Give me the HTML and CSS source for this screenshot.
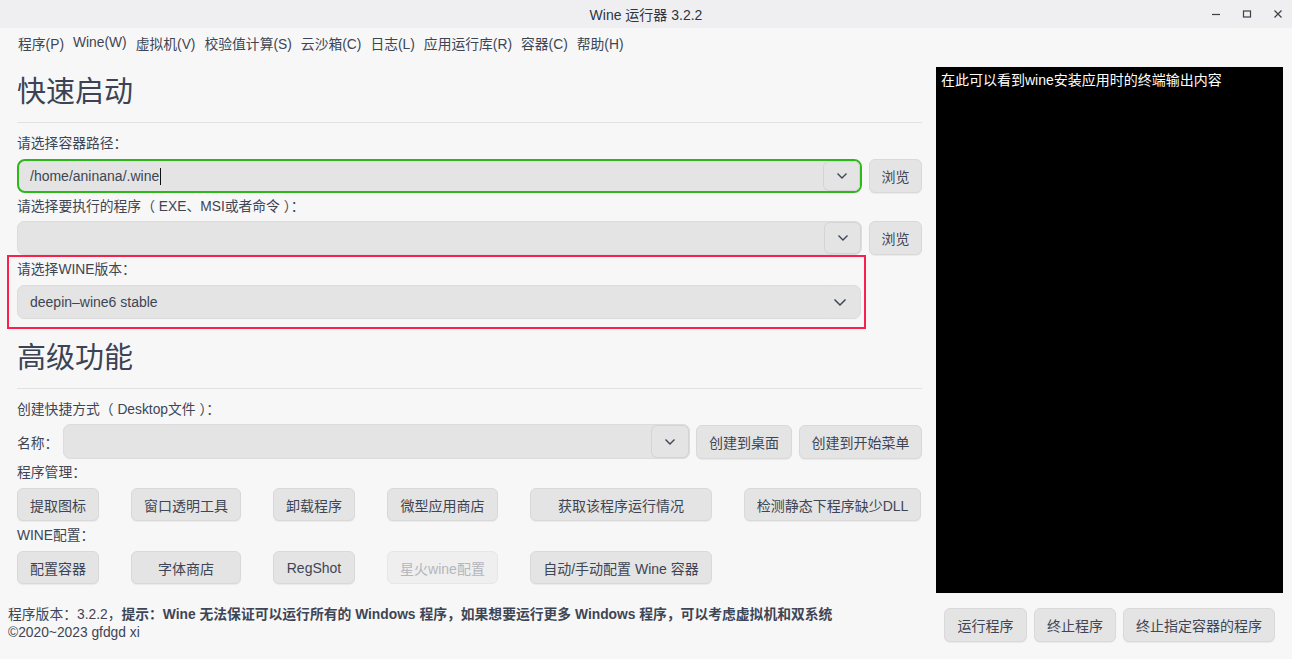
FILE: index.html
```html
<!DOCTYPE html>
<html lang="zh">
<head>
<meta charset="utf-8">
<title>Wine 运行器 3.2.2</title>
<link rel="stylesheet" href="styles.css">
</head>
<body>
<div class="window">
  <div class="titlebar">
    <span class="title">Wine 运行器 3.2.2</span>
    <div class="controls">
      <svg class="ctl" width="12" height="12" viewBox="0 0 12 12"><path d="M2 6.5h8" stroke="#3a3f4a" stroke-width="1.2"/></svg>
      <svg class="ctl" width="12" height="12" viewBox="0 0 12 12"><rect x="2.5" y="3" width="7" height="6" fill="none" stroke="#3a3f4a" stroke-width="1.2"/></svg>
      <svg class="ctl" width="12" height="12" viewBox="0 0 12 12"><path d="M2.5 2.5l7 7M9.5 2.5l-7 7" stroke="#3a3f4a" stroke-width="1.2"/></svg>
    </div>
  </div>
  <div class="menubar">
    <span>程序(P)</span><span>Wine(W)</span><span>虚拟机(V)</span><span>校验值计算(S)</span><span>云沙箱(C)</span><span>日志(L)</span><span>应用运行库(R)</span><span>容器(C)</span><span>帮助(H)</span>
  </div>
  <div class="main">
    <div class="left">
      <h1 class="heading h-first">快速启动</h1>
      <div class="sep"></div>
      <div class="label l1">请选择容器路径：</div>
      <div class="row r1">
        <div class="combo focus">
          <span class="value">/home/aninana/.wine<span class="caret"></span></span>
          <span class="drop"><svg width="12" height="8" viewBox="0 0 12 8"><path d="M1.5 1.5l4.5 4.5 4.5-4.5" fill="none" stroke="#3e4554" stroke-width="1.4"/></svg></span>
        </div>
        <button class="btn browse">浏览</button>
      </div>
      <div class="label l2">请选择要执行的程序（ EXE、MSI或者命令 ）：</div>
      <div class="row r2">
        <div class="combo">
          <span class="value"></span>
          <span class="drop"><svg width="12" height="8" viewBox="0 0 12 8"><path d="M1.5 1.5l4.5 4.5 4.5-4.5" fill="none" stroke="#3e4554" stroke-width="1.4"/></svg></span>
        </div>
        <button class="btn browse">浏览</button>
      </div>
      <div class="wine-group">
        <div class="label l3">请选择WINE版本：</div>
        <div class="combo plain">
          <span class="value">deepin–wine6 stable</span>
          <span class="drop nobox"><svg width="14" height="9" viewBox="0 0 14 9"><path d="M1.5 1.5l5.5 5.5 5.5-5.5" fill="none" stroke="#3e4554" stroke-width="1.5"/></svg></span>
        </div>
      </div>
      <h1 class="heading h-second">高级功能</h1>
      <div class="sep"></div>
      <div class="label l4">创建快捷方式（ Desktop文件 ）：</div>
      <div class="row name-row">
        <span class="name-label">名称：</span>
        <div class="combo">
          <span class="value"></span>
          <span class="drop"><svg width="12" height="8" viewBox="0 0 12 8"><path d="M1.5 1.5l4.5 4.5 4.5-4.5" fill="none" stroke="#3e4554" stroke-width="1.4"/></svg></span>
        </div>
        <button class="btn desk">创建到桌面</button>
        <button class="btn menu">创建到开始菜单</button>
      </div>
      <div class="label l5">程序管理：</div>
      <div class="grid g1">
        <button class="btn">提取图标</button>
        <button class="btn">窗口透明工具</button>
        <button class="btn">卸载程序</button>
        <button class="btn">微型应用商店</button>
        <button class="btn">获取该程序运行情况</button>
        <button class="btn">检测静态下程序缺少DLL</button>
      </div>
      <div class="label l6">WINE配置：</div>
      <div class="grid g2">
        <button class="btn">配置容器</button>
        <button class="btn">字体商店</button>
        <button class="btn">RegShot</button>
        <button class="btn disabled">星火wine配置</button>
        <button class="btn">自动/手动配置 Wine 容器</button>
      </div>
    </div>
    <div class="console">在此可以看到wine安装应用时的终端输出内容</div>
  </div>
  <div class="footer">
    <div class="info">
      <div>程序版本：3.2.2，<b>提示：Wine 无法保证可以运行所有的 Windows 程序，如果想要运行更多 Windows 程序，可以考虑虚拟机和双系统</b></div>
      <div>©2020~2023 gfdgd xi</div>
    </div>
    <div class="actions">
      <button class="btn run">运行程序</button>
      <button class="btn stop">终止程序</button>
      <button class="btn stopall">终止指定容器的程序</button>
    </div>
  </div>
</div>
</body>
</html>
```
FILE: styles.css
```css
* { box-sizing: border-box; }
html, body { margin: 0; padding: 0; }
body {
  width: 1292px;
  height: 659px;
  overflow: hidden;
  background: #f7f7f7;
  font-family: "Liberation Sans", "Noto Sans CJK SC", sans-serif;
  font-size: 13.8px;
  color: #3e4554;
}
.window { width: 1292px; height: 659px; display: flex; flex-direction: column; }

.titlebar {
  height: 28px;
  flex: none;
  background: #efeff2;
  display: flex;
  align-items: center;
  justify-content: center;
  position: relative;
}
.title { font-size: 14px; color: #2f3440; }
.controls {
  position: absolute;
  right: 8px;
  top: 8px;
  display: flex;
  gap: 19px;
}
.ctl { display: block; }

.menubar {
  height: 29px;
  flex: none;
  display: flex;
  align-items: center;
  padding-left: 18px;
  gap: 9px;
  font-size: 13.8px;
  color: #3e4554;
  margin-bottom: 1px;
}

.main {
  height: 535px;
  flex: none;
  display: flex;
  padding: 0 9px 0 17px;
  gap: 14px;
}
.left { width: 905px; display: flex; flex-direction: column; }

.heading {
  margin: 0;
  font-size: 29px;
  font-weight: normal;
  line-height: 40px;
  height: 40px;
  color: #3b4354;
}
.h-first { margin-top: 14px; }
.h-second { margin-top: 19px; }
.sep { height: 1px; background: #e2e2e2; margin-top: 10px; }

.label { height: 18px; line-height: 18px; font-size: 13.8px; }
.l1 { margin-top: 12px; }
.l2 { margin-top: 5px; }
.l3 { margin-top: 6px; }
.l4 { margin-top: 12px; }
.l5 { margin-top: 5px; }
.l6 { margin-top: 6px; }

.row { display: flex; gap: 7px; align-items: center; }
.r1 { margin-top: 6px; }
.r2 { margin-top: 5px; }

.combo {
  flex: 1;
  height: 34px;
  background: #e4e4e4;
  border: 1px solid #dcdcdc;
  border-radius: 7px;
  display: flex;
  align-items: center;
  justify-content: space-between;
  padding-left: 12px;
}
.combo.focus {
  border: 2px solid #2bb818;
  border-radius: 8px;
  padding-left: 11px;
}
.value { font-size: 14px; color: #3e4554; display: flex; align-items: center; }
.caret { display: inline-block; width: 1px; height: 17px; background: #111; margin-left: 1px; }
.drop {
  width: 37px;
  height: 100%;
  display: flex;
  align-items: center;
  justify-content: center;
  border-radius: 6px;
  box-shadow: inset 0 0 0 1px #d4d4d4;
  background: #e4e4e4;
}
.drop.nobox { box-shadow: none; width: 40px; }

.wine-group { position: relative; }
.wine-group::before {
  content: "";
  position: absolute;
  left: -10px;
  right: 56px;
  top: 0;
  bottom: -10px;
  border: 2px solid #f7214c;
  pointer-events: none;
}
.wine-group .combo { margin-top: 6px; width: 844px; flex: none; }

.btn {
  font-family: "Liberation Sans", "Noto Sans CJK SC", sans-serif;
  font-size: 14px;
  color: #3e4554;
  background: #e4e4e4;
  border: 1px solid #d9d9d9;
  border-radius: 6px;
  box-shadow: 0 1px 1px rgba(0,0,0,0.06);
  height: 33px;
  padding: 0;
  cursor: default;
}
.btn.disabled { background: #efefef; color: #b4b6bb; border-color: #e6e6e6; box-shadow: none; }
.browse { width: 53px; height: 34px; flex: none; }

.name-row { margin-top: 5px; gap: 0; }
.name-label { width: 46px; font-size: 13.8px; }
.name-row .combo { height: 35px; padding-left: 0; }
.name-row .combo .drop { width: 38px; }
.desk { width: 96px; margin-left: 6px; height: 34px; flex: none; }
.menu { width: 123px; margin-left: 7px; height: 34px; flex: none; }

.grid {
  display: grid;
  grid-template-columns: 82px 110px 82px 111px 182px 177px;
  column-gap: 32px;
}
.g1 { margin-top: 6px; }
.g2 { margin-top: 6px; }

.console {
  width: 347px;
  margin-top: 9px;
  height: 526px;
  background: #000;
  color: #fff;
  font-size: 14px;
  line-height: 18px;
  padding: 4px 5px;
}

.footer {
  flex: 1;
  display: flex;
  justify-content: space-between;
  padding: 0 17px 0 8px;
}
.info { padding-top: 13px; line-height: 18px; font-size: 13.8px; color: #3e4554; }
.info b { font-weight: bold; }
.actions { display: flex; gap: 7px; margin-top: 15px; }
.actions .btn { height: 34px; }
.run { width: 83px; }
.stop { width: 82px; }
.stopall { width: 152px; }
```
